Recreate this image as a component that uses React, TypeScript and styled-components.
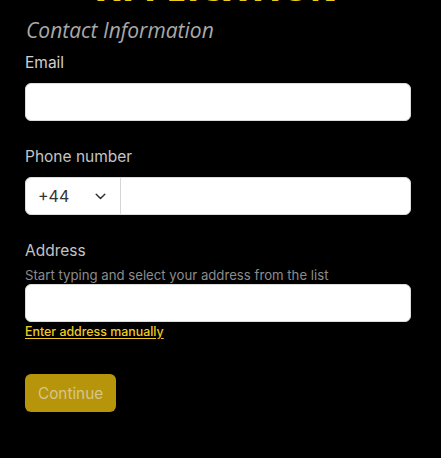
import React from "react";
import styled, { createGlobalStyle } from "styled-components";

const GlobalStyle = createGlobalStyle`
  html, body {
    margin: 0;
    padding: 0;
    background: #000;
  }
  body {
    font-family: Inter, "Liberation Sans", sans-serif;
    -webkit-font-smoothing: antialiased;
  }
  * { box-sizing: border-box; }
`;

const Page = styled.main`
  width: 441px;
  min-height: 458px;
  overflow: hidden;
  background: #000;
  padding: 0 30px 40px 25px;
`;

const Brand = styled.h1`
  margin: -31px 0 0;
  text-align: center;
  font-family: "Open Sans", sans-serif;
  font-weight: 800;
  font-size: 32px;
  line-height: 40px;
  letter-spacing: 2px;
  color: #e6cd1e;
`;

const SectionTitle = styled.h2`
  margin: 9px 0 9px 1px;
  font-family: "Open Sans", sans-serif;
  font-style: italic;
  font-weight: 400;
  font-size: 21px;
  line-height: 24px;
  color: #a9a9a9;
`;

const Field = styled.div`
  display: flex;
  flex-direction: column;
  margin-bottom: 24px;
`;

const Label = styled.label<{ $tone?: string }>`
  font-size: 15.5px;
  line-height: 24px;
  color: ${(p) => p.$tone ?? "#c4c4c4"};
  margin-bottom: 8px;
`;

const Hint = styled.span`
  margin: -5px 0 0;
  font-size: 13.2px;
  line-height: 18px;
  color: #8c8c8c;
`;

const TextInput = styled.input`
  width: 100%;
  height: 38px;
  border: 1px solid #dcdcdc;
  border-radius: 6px;
  background: #fff;
  padding: 0 12px;
  font: inherit;
  font-size: 16px;
  outline: none;
`;

const PhoneGroup = styled.div`
  display: flex;
  height: 38px;
  border: 1px solid #dcdcdc;
  border-radius: 6px;
  background: #fff;
  overflow: hidden;
`;

const CountrySelect = styled.div`
  width: 95px;
  flex: none;
  display: flex;
  align-items: center;
  justify-content: space-between;
  padding: 0 14px 0 12px;
  border-right: 1px solid #d6d6d6;
  font-size: 16px;
  color: #333;
`;

const PhoneInput = styled.input`
  flex: 1;
  border: none;
  outline: none;
  padding: 0 12px;
  font: inherit;
  font-size: 16px;
  background: transparent;
`;

const ManualLink = styled.a`
  margin-top: 2px;
  font-size: 12.4px;
  line-height: 16px;
  font-weight: 500;
  color: #f3cb1f;
  text-decoration: underline;
  text-underline-offset: 2px;
  align-self: flex-start;
  cursor: pointer;
`;

const ContinueButton = styled.button`
  margin-top: 10px;
  height: 38px;
  padding: 0 13px;
  border: none;
  border-radius: 6px;
  background: #b7950b;
  color: #d6c58c;
  font-family: Inter, "Liberation Sans", sans-serif;
  font-size: 15.3px;
`;

const Chevron = () => (
  <svg width="11" height="7" viewBox="0 0 11 7" fill="none">
    <path d="M1.2 1.2 5.5 5.5 9.8 1.2" stroke="#333" strokeWidth="1.5" strokeLinecap="round" strokeLinejoin="round" />
  </svg>
);

export default function App() {
  return (
    <>
      <GlobalStyle />
      <Page>
        <Brand>APPLICATION</Brand>
        <SectionTitle>Contact Information</SectionTitle>

        <Field>
          <Label $tone="#cfcfcf">Email</Label>
          <TextInput type="email" />
        </Field>

        <Field>
          <Label>Phone number</Label>
          <PhoneGroup>
            <CountrySelect>
              <span>+44</span>
              <Chevron />
            </CountrySelect>
            <PhoneInput type="tel" />
          </PhoneGroup>
        </Field>

        <Field>
          <Label>Address</Label>
          <Hint>Start typing and select your address from the list</Hint>
          <TextInput type="text" />
          <ManualLink>Enter address manually</ManualLink>
        </Field>

        <ContinueButton disabled>Continue</ContinueButton>
      </Page>
    </>
  );
}
